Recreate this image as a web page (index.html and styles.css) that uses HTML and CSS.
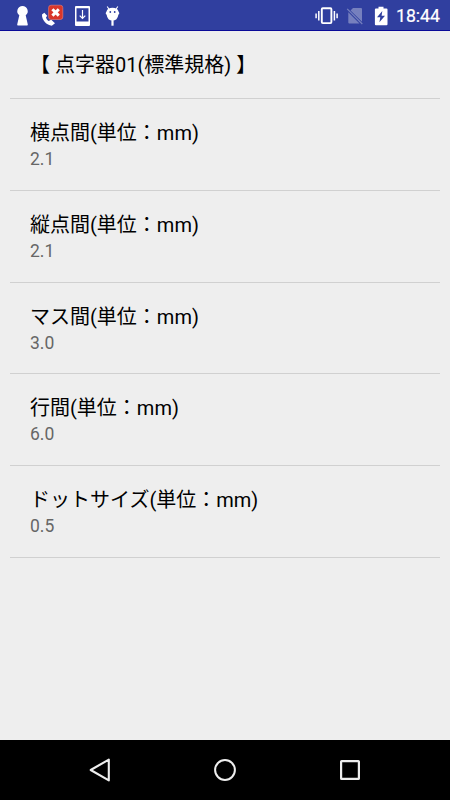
FILE: index.html
```html
<!DOCTYPE html>
<html lang="ja">
<head>
    <meta charset="UTF-8">
    <meta name="viewport" content="width=device-width, initial-scale=1.0">
    <title>点字器01(標準規格)</title>
    <link rel="stylesheet" href="styles.css">
</head>
<body>
    <header class="status-bar">
        <div class="notifications">
            <svg width="30" height="30" viewBox="0 0 30 30">
                <path d="M15.5 6a5.2 5.2 0 0 0-3.2 9.3L10.2 24.5Q10 25.6 11 25.6H20Q21 25.6 20.8 24.5L18.7 15.3A5.2 5.2 0 0 0 15.5 6z" fill="#fff"/>
            </svg>
            <svg width="30" height="30" viewBox="0 0 30 30">
                <path d="M7.3 12.8l-2.3 1.8c-.4 5.4 4.7 10.8 9.8 11.2l3.2-2.6-3.8-3.4-2.6 1.2c-1.4-.9-2.2-2-2.6-3.4l1.2-1.8z" fill="#fff"/>
                <rect x="11.6" y="5.2" width="14.2" height="14.3" rx="2.5" fill="#d9362a" stroke="#ed8175" stroke-width=".6"/>
                <path d="M15.4 9.2l6.4 6.4M21.8 9.2l-6.4 6.4" stroke="#fff" stroke-width="3"/>
            </svg>
            <svg width="30" height="30" viewBox="0 0 30 30">
                <path fill-rule="evenodd" d="M9 6h13a1 1 0 0 1 1 1v18a1 1 0 0 1-1 1H9a1 1 0 0 1-1-1V7a1 1 0 0 1 1-1zM9.5 8.3v13.2h12V8.3z" fill="#fff"/>
                <path d="M15.5 10v8.3M12.7 15.6l2.8 2.8 2.8-2.8" fill="none" stroke="#fff" stroke-width="1.2"/>
            </svg>
            <svg width="30" height="30" viewBox="0 0 30 30">
                <path d="M10.2 6.5l2 3M20.8 6.5l-2 3" stroke="#fff" stroke-width="1.1"/>
                <path d="M9.5 11.5Q10.5 7.8 15.5 7.8T21.5 11.5L22.4 13.3 21.3 15Q20.5 20.5 15.5 20.5T9.7 15L8.6 13.3z" fill="#fff"/>
                <path d="M15.5 20v5.7" stroke="#fff" stroke-width="2.2"/>
                <circle cx="13.3" cy="12" r=".9" fill="#303f9f"/>
                <circle cx="17.7" cy="12" r=".9" fill="#303f9f"/>
            </svg>
        </div>
        <div class="system">
            <svg class="vibrate" width="24" height="20" viewBox="0 0 24 20">
                <rect x="6.8" y="2.3" width="9.6" height="14.8" rx="1" fill="none" stroke="#fff" stroke-width="1.9"/>
                <path d="M3.8 5v9.5M1.1 7.5v4.8M19.4 5v9.5M22.1 7.5v4.8" stroke="#fff" stroke-width="1.5"/>
            </svg>
            <svg class="no-sim" width="18" height="20" viewBox="0 0 18 20">
                <path d="M7 2h8q1 0 1 1v12.8L4.5 4.5zM2.3 6.3L13.5 17.6H3.3q-1 0-1-1z" fill="#7680be"/>
                <path d="M1.2 2.8L16.3 18" stroke="#7680be" stroke-width="1.2"/>
            </svg>
            <svg class="battery" width="14" height="20" viewBox="0 0 14 20">
                <path d="M4.5 .8h5v1.8h3q1 0 1 1v14.6q0 1-1 1H1.9q-1 0-1-1V3.6q0-1 1-1h2.6z" fill="#fff"/>
                <path d="M8.3 5L3 11.2h3.3L5.4 16.2 11 9.7H7.6z" fill="#303f9f"/>
            </svg>
            <span class="clock">18:44</span>
        </div>
    </header>

    <main class="settings">
        <h1 class="heading">【 点字器01(標準規格) 】</h1>
        <div class="item">
            <div class="item-title">横点間(単位：mm)</div>
            <div class="item-value">2.1</div>
        </div>
        <div class="item">
            <div class="item-title">縦点間(単位：mm)</div>
            <div class="item-value">2.1</div>
        </div>
        <div class="item">
            <div class="item-title">マス間(単位：mm)</div>
            <div class="item-value">3.0</div>
        </div>
        <div class="item">
            <div class="item-title">行間(単位：mm)</div>
            <div class="item-value">6.0</div>
        </div>
        <div class="item">
            <div class="item-title">ドットサイズ(単位：mm)</div>
            <div class="item-value">0.5</div>
        </div>
    </main>

    <nav class="nav-bar">
        <svg width="26" height="26" viewBox="0 0 26 26">
            <path d="M21.8 2.6v20.8L3.7 13z" fill="none" stroke="#eee" stroke-width="2.1" stroke-linejoin="round"/>
        </svg>
        <svg width="26" height="26" viewBox="0 0 26 26">
            <circle cx="13" cy="13" r="9.9" fill="none" stroke="#eee" stroke-width="2"/>
        </svg>
        <svg width="26" height="26" viewBox="0 0 26 26">
            <rect x="4.1" y="4.1" width="17.8" height="17.8" rx=".5" fill="none" stroke="#eee" stroke-width="2.2"/>
        </svg>
    </nav>
</body>
</html>
```

FILE: styles.css
```css
* {
    margin: 0;
    padding: 0;
    box-sizing: border-box;
}

body {
    font-family: Roboto, 'Noto Sans CJK JP', sans-serif;
    background: #eee;
    height: 100vh;
    display: flex;
    flex-direction: column;
    color: #000;
    overflow: hidden;
}

svg {
    display: block;
}

.status-bar {
    display: flex;
    justify-content: space-between;
    height: 31px;
    padding: 0 10px 0 7px;
    background: #303f9f;
    border-bottom: 1px solid #0a0a98;
    color: #fff;
}

.notifications {
    display: flex;
}

.system {
    display: flex;
    align-items: center;
    padding-top: 1px;
}

.no-sim {
    margin-left: 7px;
}

.battery {
    margin-left: 10px;
}

.clock {
    margin-left: 8px;
    font-size: 17.7px;
    line-height: 30px;
    -webkit-text-stroke: 0.2px #fff;
}

.settings {
    flex: 1;
    padding: 0 10px;
}

.heading {
    height: 68px;
    padding: 19px 20px 0;
    border-bottom: 1px solid #d0d0d0;
    font-size: 20px;
    font-weight: 400;
    line-height: 30px;
    white-space: nowrap;
}

.item {
    height: 91.8px;
    padding: 20px 20px 0;
    border-bottom: 1px solid #d0d0d0;
}

.item-title {
    font-size: 20px;
    line-height: 28px;
}

.item-value {
    color: #666;
    font-size: 17.5px;
    line-height: 25px;
}

.nav-bar {
    display: flex;
    align-items: center;
    justify-content: center;
    gap: 99px;
    height: 60px;
    background: #000;
}
```
